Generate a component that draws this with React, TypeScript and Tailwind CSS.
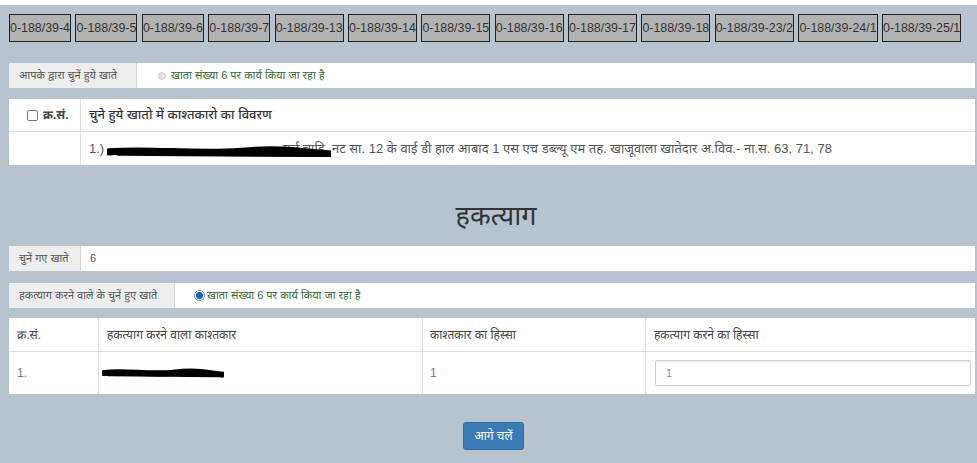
const accounts = [
  "0-188/39-4",
  "0-188/39-5",
  "0-188/39-6",
  "0-188/39-7",
  "0-188/39-13",
  "0-188/39-14",
  "0-188/39-15",
  "0-188/39-16",
  "0-188/39-17",
  "0-188/39-18",
  "0-188/39-23/2",
  "0-188/39-24/1",
  "0-188/39-25/1",
];

const font = "font-['Liberation_Sans','Noto_Sans_Devanagari','Noto_Sans',sans-serif]";

function Scribble({ width, height }: { width: number; height: number }) {
  return (
    <svg width={width} height={height} viewBox={`0 0 ${width} ${height}`} className="inline-block align-middle">
      <path
        d={`M2 ${height * 0.45} C ${width * 0.2} ${height * 0.2}, ${width * 0.4} ${height * 0.7}, ${width * 0.6} ${height * 0.4} S ${width * 0.9} ${height * 0.55}, ${width - 2} ${height * 0.6}`}
        stroke="#000"
        strokeWidth={height * 0.55}
        strokeLinecap="round"
        fill="none"
      />
      <path
        d={`M${width * 0.05} ${height * 0.6} L ${width * 0.95} ${height * 0.7}`}
        stroke="#000"
        strokeWidth={height * 0.3}
        strokeLinecap="round"
        fill="none"
      />
    </svg>
  );
}

function InfoRow({ label, children, labelWidth }: { label: string; children: React.ReactNode; labelWidth: string }) {
  return (
    <div className="flex h-[25px] bg-white">
      <div className={`${labelWidth} shrink-0 bg-[#eeeeee] border-r border-[#d8d8d8] flex items-center pl-[10px] text-[11px] text-[#555]`}>
        {label}
      </div>
      <div className="flex-1 flex items-center">{children}</div>
    </div>
  );
}

export default function App() {
  return (
    <div className={`w-[977px] h-[463px] bg-[#b8c3d0] overflow-hidden ${font} text-[#333]`}>
      <div className="h-[5px] bg-white" />

      <div className="flex gap-[4.5px] pl-[9px] pt-[9px]">
        {accounts.map((a) => (
          <button
            key={a}
            className="h-[28px] border border-[#222] bg-[#b3b3b3] text-[12.4px] text-[#333] leading-[26px] px-0 font-['Liberation_Sans',sans-serif]"
          >
            {a}
          </button>
        ))}
      </div>

      <div className="px-[9px] mt-[21px] mr-[-7px]">
        <InfoRow label="आपके द्वारा चुनें हुये खाते" labelWidth="w-[128px]">
          <span className="ml-[21px] w-[8px] h-[8px] rounded-full bg-[#e3e3e3] border border-[#d0d0d0]" />
          <span className="ml-[5px] text-[11px] text-[#2f6b2f]">खाता संख्या 6 पर कार्य किया जा रहा है</span>
        </InfoRow>

        <div className="mt-[11px] bg-white text-[13px]">
          <div className="flex h-[33px] border-b border-[#dedede]">
            <div className="w-[72px] shrink-0 border-r border-[#dedede] flex items-center pl-[18px] gap-[5px]">
              <span className="w-[11px] h-[11px] rounded-[2px] border border-[#777] bg-white" />
              <span className="font-bold text-[#444] text-[12px]">क्र.सं.</span>
            </div>
            <div className="flex items-center pl-[8px] font-medium text-[#333]">चुने हुये खातो में काश्तकारो का विवरण</div>
          </div>
          <div className="flex h-[33px]">
            <div className="w-[72px] shrink-0 border-r border-[#dedede]" />
            <div className="flex items-center pl-[8px] text-[#555] whitespace-nowrap">
              <span>1.)</span>
              <span className="relative ml-[3px] w-[232px] h-[16px] overflow-hidden inline-flex items-center justify-end">
                <span className="text-[#555]">मूर्ल चाहि. न</span>
                <span className="absolute left-0 top-[1px]">
                  <Scribble width={224} height={13} />
                </span>
              </span>
              <span>ट सा. 12 के वाई डी हाल आबाद 1 एस एच डब्ल्यू एम तह. खाजूवाला खातेदार अ.विव.- ना.स. 63, 71, 78</span>
            </div>
          </div>
        </div>

        <h1 className="text-center text-[27px] text-[#333] leading-none mt-[38px] mb-[16px] pl-[8px]">हकत्याग</h1>

        <InfoRow label="चुनें गए खाते" labelWidth="w-[72px]">
          <span className="ml-[9px] text-[11px] text-[#555]">6</span>
        </InfoRow>

        <div className="mt-[12px]">
          <InfoRow label="हकत्याग करने वाले के चुनें हुए खाते" labelWidth="w-[166px]">
            <span className="ml-[19px] w-[11px] h-[11px] rounded-full border border-[#6b8fc2] bg-white flex items-center justify-center">
              <span className="w-[7px] h-[7px] rounded-full bg-[#1f5fbf]" />
            </span>
            <span className="ml-[2px] text-[11px] text-[#2f6b2f]">खाता संख्या 6 पर कार्य किया जा रहा है</span>
          </InfoRow>
        </div>

        <div className="mt-[10px] bg-white text-[12px] text-[#444]">
          <div className="grid grid-cols-[90px_324px_223px_1fr] h-[34px] border-b border-[#dedede]">
            <div className="flex items-center pl-[8px] border-r border-[#dedede]">क्र.सं.</div>
            <div className="flex items-center pl-[8px] border-r border-[#dedede]">हकत्याग करने वाला काश्तकार</div>
            <div className="flex items-center pl-[7px] border-r border-[#dedede]">काश्तकार का हिस्सा</div>
            <div className="flex items-center pl-[8px]">हकत्याग करने का हिस्सा</div>
          </div>
          <div className="grid grid-cols-[90px_324px_223px_1fr] h-[42px]">
            <div className="flex items-center pl-[8px] border-r border-[#dedede] text-[#777]">1.</div>
            <div className="flex items-center pl-[3px] border-r border-[#dedede]">
              <Scribble width={122} height={11} />
            </div>
            <div className="flex items-center pl-[7px] border-r border-[#dedede] text-[#777]">1</div>
            <div className="flex items-center pl-[9px] pr-[4px]">
              <input
                readOnly
                value="1"
                className="w-full h-[26px] border border-[#cfcfcf] rounded-[2px] pl-[10px] text-[11px] text-[#888] shadow-[inset_0_1px_1px_rgba(0,0,0,0.08)] outline-none"
              />
            </div>
          </div>
        </div>

        <div className="flex justify-center mt-[28px] pl-[3px]">
          <button className="h-[28px] px-[10px] rounded-[3px] bg-[#3a7bb6] border border-[#2e6da4] text-white text-[12px]">
            आगे चलें
          </button>
        </div>
      </div>
    </div>
  );
}
